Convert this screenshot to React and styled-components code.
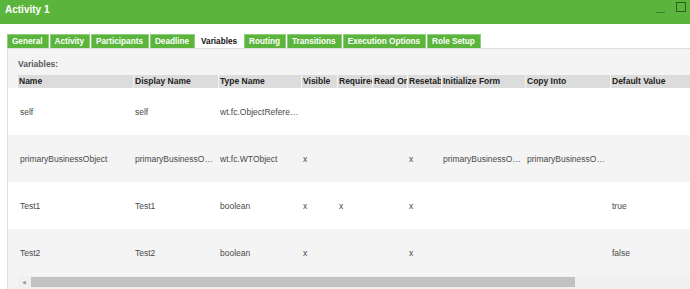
import * as React from 'react';
import styled, { createGlobalStyle } from 'styled-components';

const GlobalStyle = createGlobalStyle`
  html, body {
    margin: 0;
    padding: 0;
    background: #ffffff;
    font-family: "Liberation Sans", Arial, sans-serif;
  }
`;

const tabs = [
  'General',
  'Activity',
  'Participants',
  'Deadline',
  'Variables',
  'Routing',
  'Transitions',
  'Execution Options',
  'Role Setup',
];

const columns = [
  { title: 'Name', width: 115 },
  { title: 'Display Name', width: 85 },
  { title: 'Type Name', width: 83 },
  { title: 'Visible', width: 36 },
  { title: 'Required', width: 35 },
  { title: 'Read Only', width: 35 },
  { title: 'Resetable', width: 34 },
  { title: 'Initialize Form', width: 84 },
  { title: 'Copy Into', width: 85 },
  { title: 'Default Value', width: 100 },
];

const rows = [
  ['self', 'self', 'wt.fc.ObjectReference', '', '', '', '', '', '', ''],
  ['primaryBusinessObject', 'primaryBusinessObject', 'wt.fc.WTObject', 'x', '', '', 'x', 'primaryBusinessObject', 'primaryBusinessObject', ''],
  ['Test1', 'Test1', 'boolean', 'x', 'x', '', 'x', '', '', 'true'],
  ['Test2', 'Test2', 'boolean', 'x', '', '', 'x', '', '', 'false'],
];

const gridTemplate = columns.map((c) => `${c.width}px`).join(' ');

const App = () => {
  return (
    <>
      <GlobalStyle />
      <Window>
        <TitleBar>
          <Title>Activity 1</Title>
          <WindowButtons>
            <Minimize />
            <Maximize />
          </WindowButtons>
        </TitleBar>
        <TabStrip>
          {tabs.map((t) => (
            <Tab key={t} $active={t === 'Variables'}>{t}</Tab>
          ))}
        </TabStrip>
        <Panel>
          <Label>Variables:</Label>
          <Table>
            <HeaderRow>
              {columns.map((c) => (
                <HeaderCell key={c.title}>{c.title}</HeaderCell>
              ))}
            </HeaderRow>
            {rows.map((r, i) => (
              <Row key={i} $odd={i % 2 === 1}>
                {r.map((v, j) => (
                  <Cell key={j}>{v}</Cell>
                ))}
              </Row>
            ))}
          </Table>
          <Scrollbar>
            <ScrollArrow>&#9664;</ScrollArrow>
            <Thumb />
          </Scrollbar>
        </Panel>
      </Window>
    </>
  );
};

export default App;

const Window = styled.div`
  width: 690px;
  height: 289px;
  display: flex;
  flex-direction: column;
  overflow: hidden;
  background: #ffffff;
`;

const TitleBar = styled.div`
  height: 24px;
  flex-shrink: 0;
  background: #5bb53c;
  display: flex;
  align-items: center;
  justify-content: space-between;
  padding: 0 4px 0 5px;
  box-sizing: border-box;
`;

const Title = styled.div`
  color: #ffffff;
  font-weight: bold;
  font-size: 10px;
  margin-top: -5px;
`;

const WindowButtons = styled.div`
  display: flex;
  align-items: center;
  gap: 11px;
  margin-top: -10px;
`;

const Minimize = styled.div`
  width: 9px;
  height: 1px;
  background: #3a7d28;
  margin-top: 10px;
`;

const Maximize = styled.div`
  width: 8px;
  height: 8px;
  border: 1px solid #2f5f20;
`;

const TabStrip = styled.div`
  display: flex;
  gap: 1px;
  margin: 10px 0 0 7px;
  height: 14px;
  flex-shrink: 0;
`;

const Tab = styled.div`
  height: 14px;
  box-sizing: border-box;
  padding: 0 5px 0 4px;
  display: flex;
  align-items: center;
  font-size: 8.2px;
  font-weight: bold;
  color: ${({ $active }) => ($active ? '#111111' : '#ffffff')};
  background: ${({ $active }) => ($active ? '#ffffff' : '#5bb53c')};
  border: 1px solid ${({ $active }) => ($active ? '#ffffff' : '#8fce7a')};
  border-bottom: none;
`;

const Panel = styled.div`
  flex: 1;
  margin-left: 7px;
  background: #f4f4f4;
  border-left: 1px solid #dedede;
  border-top: 1px solid #dedede;
  display: flex;
  flex-direction: column;
`;

const Label = styled.div`
  font-size: 8.5px;
  font-weight: bold;
  color: #5a5a5a;
  padding: 10px 0 0 10px;
  height: 26px;
  box-sizing: border-box;
`;

const Table = styled.div`
  display: flex;
  flex-direction: column;
`;

const HeaderRow = styled.div`
  display: grid;
  grid-template-columns: ${gridTemplate};
  margin-left: 10px;
  height: 13px;
  background: #dcdcdc;
`;

const HeaderCell = styled.div`
  font-size: 8.5px;
  font-weight: bold;
  color: #222222;
  line-height: 13px;
  padding-left: 1px;
  border-left: 1px solid #f4f4f4;
  white-space: nowrap;
  overflow: hidden;
  min-width: 0;
  &:first-child {
    border-left: none;
  }
`;

const Row = styled.div`
  display: grid;
  grid-template-columns: ${gridTemplate};
  padding-left: 10px;
  height: 47px;
  align-items: center;
  background: ${({ $odd }) => ($odd ? '#f4f4f4' : '#ffffff')};
`;

const Cell = styled.div`
  font-size: 8.5px;
  color: #4a4a4a;
  padding-left: 2px;
  padding-right: 2px;
  white-space: nowrap;
  overflow: hidden;
  text-overflow: ellipsis;
`;

const Scrollbar = styled.div`
  margin: 0 0 0 10px;
  height: 12px;
  background: #f0f0f0;
  display: flex;
  align-items: center;
  padding-left: 4px;
`;

const ScrollArrow = styled.div`
  font-size: 5px;
  color: #9a9a9a;
  width: 9px;
`;

const Thumb = styled.div`
  width: 544px;
  height: 10px;
  background: #c2c2c2;
`;
